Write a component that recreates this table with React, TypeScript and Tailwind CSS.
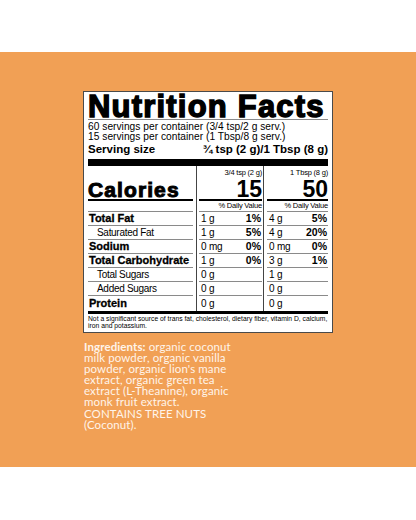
const label = "font-['Liberation_Sans',Arial,sans-serif]";

interface Row {
  name: string;
  bold?: boolean;
  indent?: boolean;
  a: string;
  ap?: string;
  b: string;
  bp?: string;
}

const rows: Row[] = [
  { name: "Total Fat", bold: true, a: "1 g", ap: "1%", b: "4 g", bp: "5%" },
  { name: "Saturated Fat", indent: true, a: "1 g", ap: "5%", b: "4 g", bp: "20%" },
  { name: "Sodium", bold: true, a: "0 mg", ap: "0%", b: "0 mg", bp: "0%" },
  { name: "Total Carbohydrate", bold: true, a: "1 g", ap: "0%", b: "3 g", bp: "1%" },
  { name: "Total Sugars", indent: true, a: "0 g", b: "1 g" },
  { name: "Added Sugars", indent: true, a: "0 g", b: "0 g" },
  { name: "Protein", bold: true, a: "0 g", b: "0 g" },
];

function rowClass(i: number) {
  return i < rows.length - 1
    ? "h-[14px] border-b border-[#8a8a8a]"
    : "h-[15px]";
}

function AmountColumn({
  serving,
  calories,
  values,
  className,
}: {
  serving: string;
  calories: string;
  values: { amount: string; pct?: string }[];
  className: string;
}) {
  return (
    <div className={`border-l border-[#444] ${className}`}>
      {/* Calories header */}
      <div className="flex h-[33px] flex-col items-end justify-between pt-[2px]">
        <span className="text-[7.5px] leading-[9px] tracking-[-0.2px]">{serving}</span>
        <span className="text-[23px] font-bold leading-[20px]">{calories}</span>
      </div>
      <div className="h-[2px] bg-black" />
      <div className="h-[11px] border-b border-[#8a8a8a] text-right text-[7.5px] leading-[10px] tracking-[-0.2px]">
        % Daily Value
      </div>
      {values.map((v, i) => (
        <div key={i} className={`flex items-center justify-between pl-[2px] ${rowClass(i)}`}>
          <span className="text-[10px] tracking-[-0.2px]">{v.amount}</span>
          {v.pct && <span className="pr-[1px] text-[10.5px] font-bold">{v.pct}</span>}
        </div>
      ))}
    </div>
  );
}

export default function App() {
  return (
    <div className="h-[520px] w-[416px] bg-white">
      <div className="h-[52px]" />
      <div className="h-[415px] overflow-hidden bg-[#F1A055] pt-[39px]">
        {/* Label */}
        <div className={`ml-[83px] h-[242px] w-[250px] border border-[#4a4a4a] bg-white px-[4px] text-black ${label}`}>
          <div className="h-[28px] border-b border-[#8a8a8a] text-[31px] font-bold leading-[29px] tracking-[1.2px] whitespace-nowrap [-webkit-text-stroke:1.4px_#000]">
            Nutrition Facts
          </div>
          <div className="pt-[2px] text-[10.2px] leading-[10px] tracking-[0.03px]">
            <div>60 servings per container (3/4 tsp/2 g serv.)</div>
            <div>15 servings per container (1 Tbsp/8 g serv.)</div>
          </div>
          <div className="mt-[1px] flex h-[13px] items-center justify-between text-[11.5px] font-bold leading-[13px]">
            <span>Serving size</span>
            <span>¾ tsp (2 g)/1 Tbsp (8 g)</span>
          </div>
          <div className="mt-[3px] h-[7px] bg-black" />

          {/* Table */}
          <div className="flex">
            <div className="w-[108px] pr-[3px]">
              <div className="flex h-[33px] items-end">
                <span className="text-[21px] font-bold leading-[18px] tracking-[1.1px] [-webkit-text-stroke:1px_#000]">
                  Calories
                </span>
              </div>
              <div className="h-[2px] bg-black" />
              <div className="h-[11px] border-b border-[#8a8a8a]" />
              {rows.map((r, i) => (
                <div
                  key={r.name}
                  className={`flex items-center ${rowClass(i)} ${
                    r.bold
                      ? "text-[11px] font-bold [-webkit-text-stroke:0.3px_#000]"
                      : "text-[10px] tracking-[-0.3px]"
                  } ${r.indent ? "pl-[9px]" : "pl-[1px]"}`}
                >
                  {r.name}
                </div>
              ))}
            </div>
            <AmountColumn
              className="w-[67px] pl-[2px] pr-[1px]"
              serving="3/4 tsp (2 g)"
              calories="15"
              values={rows.map((r) => ({ amount: r.a, pct: r.ap }))}
            />
            <AmountColumn
              className="w-[65px] pl-[3px]"
              serving="1 Tbsp (8 g)"
              calories="50"
              values={rows.map((r) => ({ amount: r.b, pct: r.bp }))}
            />
          </div>
          <div className="h-[3px] bg-black" />
          <div className="pt-[1px] text-[6.75px] leading-[7.3px] whitespace-nowrap">
            <div>Not a significant source of trans fat, cholesterol, dietary fiber, vitamin D, calcium,</div>
            <div>iron and potassium.</div>
          </div>
        </div>

        {/* Ingredients */}
        <div className="ml-[84px] mt-[8px] font-['Lato',sans-serif] text-[11.5px] leading-[11.1px] tracking-[0.1px] text-[#FFF4EA] whitespace-nowrap">
          <div>
            <span className="font-bold">Ingredients:</span> organic coconut
          </div>
          <div>milk powder, organic vanilla</div>
          <div>powder, organic lion's mane</div>
          <div>extract, organic green tea</div>
          <div>extract (L-Theanine), organic</div>
          <div>monk fruit extract.</div>
          <div>CONTAINS TREE NUTS</div>
          <div>(Coconut).</div>
        </div>
      </div>
    </div>
  );
}
